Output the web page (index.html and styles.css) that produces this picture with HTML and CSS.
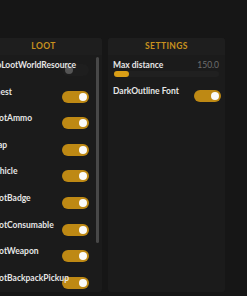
FILE: index.html
```html
<!DOCTYPE html>
<html lang="en">
<head>
  <meta charset="UTF-8">
  <title>Menu</title>
  <link rel="stylesheet" href="styles.css">
</head>
<body>

<div class="window">

  <div class="panel">
    <div class="panel-head">LOOT</div>
    <div class="panel-body">
      <div class="row"><span class="label">NoLootWorldResource</span><span class="toggle off"></span></div>
      <div class="row"><span class="label">Chest</span><span class="toggle"></span></div>
      <div class="row"><span class="label">LootAmmo</span><span class="toggle"></span></div>
      <div class="row"><span class="label">Map</span><span class="toggle"></span></div>
      <div class="row"><span class="label">Vehicle</span><span class="toggle"></span></div>
      <div class="row"><span class="label">LootBadge</span><span class="toggle"></span></div>
      <div class="row"><span class="label">LootConsumable</span><span class="toggle"></span></div>
      <div class="row"><span class="label">LootWeapon</span><span class="toggle"></span></div>
      <div class="row"><span class="label">LootBackpackPickup</span><span class="toggle"></span></div>
    </div>
    <div class="scrollbar"></div>
  </div>

  <div class="panel">
    <div class="panel-head">SETTINGS</div>
    <div class="panel-body">
      <div class="slider-row">
        <div class="slider-top">
          <span class="label">Max distance</span>
          <span class="value">150.0</span>
        </div>
        <div class="slider"><div class="grab"></div></div>
      </div>
      <div class="row"><span class="label">DarkOutline Font</span><span class="toggle"></span></div>
    </div>
  </div>

</div>

</body>
</html>
```

FILE: styles.css
```css
body {
  margin: 0;
  width: 247px;
  height: 296px;
  overflow: hidden;
  background-color: #161616;
  font-family: Lato, "Noto Sans", sans-serif;
  color: #e6e6e6;
}

.window {
  display: flex;
  gap: 6px;
  margin-left: -15px;
  padding-top: 38px;
}

.panel {
  position: relative;
  width: 117px;
  height: 254px;
  background-color: #1b1b1b;
  border-radius: 3px;
  box-sizing: border-box;
  overflow: hidden;
}

.panel-head {
  height: 17px;
  line-height: 17px;
  text-align: center;
  font-size: 8.5px;
  font-weight: bold;
  letter-spacing: 0.4px;
  color: #c8921e;
  background-color: #1e1e1e;
}

.panel-body {
  padding: 5px 4px 0 5px;
}

.panel:first-child .panel-body {
  padding-right: 13px;
}

.row {
  display: flex;
  align-items: flex-start;
  height: 26.6px;
}

.label {
  position: relative;
  z-index: 1;
  flex: 1;
  min-width: 0;
  font-size: 8.5px;
  font-weight: bold;
  line-height: 10px;
  white-space: nowrap;
}

.toggle {
  position: relative;
  flex: none;
  width: 27px;
  height: 12px;
  margin-top: 4px;
  border-radius: 6px;
  background-color: #be8914;
}

.toggle::after {
  content: "";
  position: absolute;
  top: 2px;
  right: 2px;
  width: 8px;
  height: 8px;
  border-radius: 50%;
  background-color: #fafafa;
}

.toggle.off {
  background-color: #1e1e1e;
}

.toggle.off::after {
  right: auto;
  left: 3px;
  background-color: #555;
}

.scrollbar {
  position: absolute;
  top: 19px;
  right: 3px;
  width: 3px;
  height: 186px;
  border-radius: 2px;
  background-color: #484848;
}

.slider-row {
  height: 26px;
}

.slider-top {
  display: flex;
  justify-content: space-between;
  padding-right: 2px;
}

.slider-top .label {
  flex: none;
}

.value {
  font-size: 8.5px;
  line-height: 10px;
  color: #6e6e6e;
}

.slider {
  margin-top: 1px;
  margin-left: 1px;
  margin-right: 2px;
  height: 6px;
  border-radius: 3px;
  background-color: #202020;
}

.grab {
  width: 15px;
  height: 6px;
  border-radius: 3px;
  background-color: #d99e16;
}
```
